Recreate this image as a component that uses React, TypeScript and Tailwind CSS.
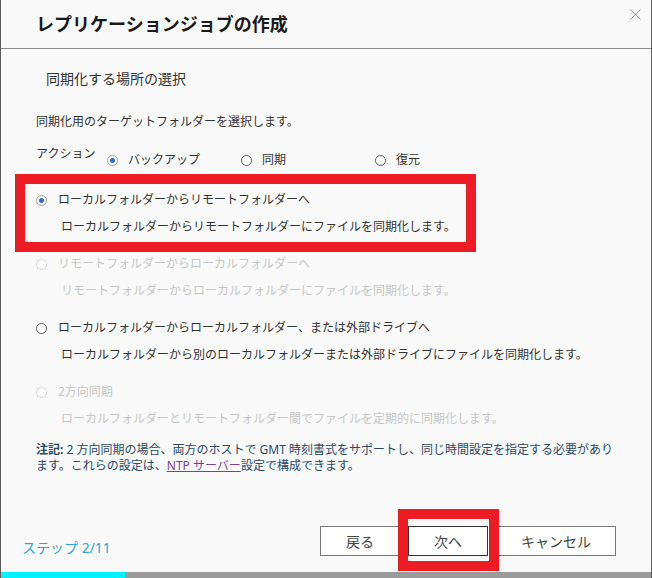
type RadioProps = {
  checked?: boolean;
  disabled?: boolean;
};

function Radio({ checked, disabled }: RadioProps) {
  const ring = disabled
    ? 'border-[#d2d2d2]'
    : checked
      ? 'border-[#a0a0a0]'
      : 'border-[#5a5a5a]';
  return (
    <span
      className={`flex size-[11px] shrink-0 items-center justify-center rounded-full border bg-white ${ring}`}
    >
      {checked && <span className="size-[5px] rounded-full bg-[#2c6cdc]" />}
    </span>
  );
}

type OptionProps = {
  title: string;
  desc: string;
  checked?: boolean;
  disabled?: boolean;
  className?: string;
};

function SyncOption({ title, desc, checked, disabled, className = '' }: OptionProps) {
  const tone = disabled ? 'text-[#c6c6c6]' : 'text-[#333]';
  return (
    <div className={`${tone} ${className}`}>
      <div className="flex items-center gap-[11px] leading-[16px]">
        <Radio checked={checked} disabled={disabled} />
        <span>{title}</span>
      </div>
      <p className="mt-[11px] pl-[25px] leading-[16px]">{desc}</p>
    </div>
  );
}

const actions = [
  { label: 'バックアップ', checked: true },
  { label: '同期', checked: false },
  { label: '復元', checked: false },
];

export default function App() {
  return (
    <div
      className="relative flex h-[578px] w-[652px] flex-col overflow-hidden border-x border-[#5c5c5c] bg-[#f9f9f9] text-[12px] text-[#333]"
      style={{ fontFamily: '"Noto Sans", "Noto Sans CJK JP", sans-serif' }}
    >
      {/* header */}
      <div className="flex h-[49px] shrink-0 justify-between border-b border-[#8c8c8c] pl-[35px] pr-[10px]">
        <h1 className="self-center text-[18px] font-bold leading-[24px] text-[#1a1a1a]">
          レプリケーションジョブの作成
        </h1>
        <button type="button" className="mt-[9px] self-start" aria-label="閉じる">
          <svg width="11" height="11" viewBox="0 0 11 11" className="block">
            <path d="M0.5 0.5 L10.5 10.5 M10.5 0.5 L0.5 10.5" stroke="#9c9c9c" strokeWidth="1" />
          </svg>
        </button>
      </div>

      {/* body */}
      <div className="px-[35px]">
        <h2 className="pl-[10px] pt-[22px] text-[14px] leading-[16px] text-[#333]">
          同期化する場所の選択
        </h2>
        <p className="mt-[27px] leading-[16px]">同期化用のターゲットフォルダーを選択します。</p>

        <div className="mt-[16px] flex items-start">
          <span className="w-[71px] leading-[16px]">アクション</span>
          <div className="mt-[6px] flex">
            {actions.map((a) => (
              <label key={a.label} className="flex w-[134px] items-center gap-[10px] leading-[16px]">
                <Radio checked={a.checked} />
                <span>{a.label}</span>
              </label>
            ))}
          </div>
        </div>

        <SyncOption
          className="mt-[24px]"
          checked
          title="ローカルフォルダーからリモートフォルダーへ"
          desc="ローカルフォルダーからリモートフォルダーにファイルを同期化します。"
        />
        <SyncOption
          className="mt-[21px]"
          disabled
          title="リモートフォルダーからローカルフォルダーへ"
          desc="リモートフォルダーからローカルフォルダーにファイルを同期化します。"
        />
        <SyncOption
          className="mt-[21px]"
          title="ローカルフォルダーからローカルフォルダー、または外部ドライブへ"
          desc="ローカルフォルダーから別のローカルフォルダーまたは外部ドライブにファイルを同期化します。"
        />
        <SyncOption
          className="mt-[21px]"
          disabled
          title="2方向同期"
          desc="ローカルフォルダーとリモートフォルダー間でファイルを定期的に同期化します。"
        />

        <p className="mt-[15px] w-[582px] leading-[16px] text-[#2b4869]">
          <span className="font-bold">注記:</span> 2 方向同期の場合、両方のホストで GMT
          時刻書式をサポートし、同じ時間設定を指定する必要があります。これらの設定は、
          <a className="text-[#7b3f9e] underline">NTP サーバー</a>設定で構成できます。
        </p>
      </div>

      {/* footer */}
      <div className="flex flex-1 items-end justify-between pb-[16px] pl-[21px] pr-[35px]">
        <span className="text-[14px] leading-[16px] text-[#2aa6d6]">ステップ 2/11</span>
        <div className="flex gap-[8px] text-[14px] text-[#444]">
          <button type="button" className="h-[30px] w-[80px] border border-[#7a7a7a] bg-white">
            戻る
          </button>
          <button type="button" className="h-[30px] w-[80px] border border-[#333] bg-white">
            次へ
          </button>
          <button type="button" className="h-[30px] w-[120px] border border-[#7a7a7a] bg-white">
            キャンセル
          </button>
        </div>
      </div>

      {/* progress */}
      <div className="flex h-[6px] shrink-0 bg-[#9b9b9b]">
        <div className="w-[124px] bg-[#00f2ff]" />
      </div>

      {/* annotation boxes */}
      <div className="pointer-events-none absolute left-[14px] top-[174px] h-[78px] w-[461px] border-[10px] border-[#ed1c24]" />
      <div className="pointer-events-none absolute left-[397px] top-[509px] h-[62px] w-[101px] border-[10px] border-[#ed1c24]" />
    </div>
  );
}
